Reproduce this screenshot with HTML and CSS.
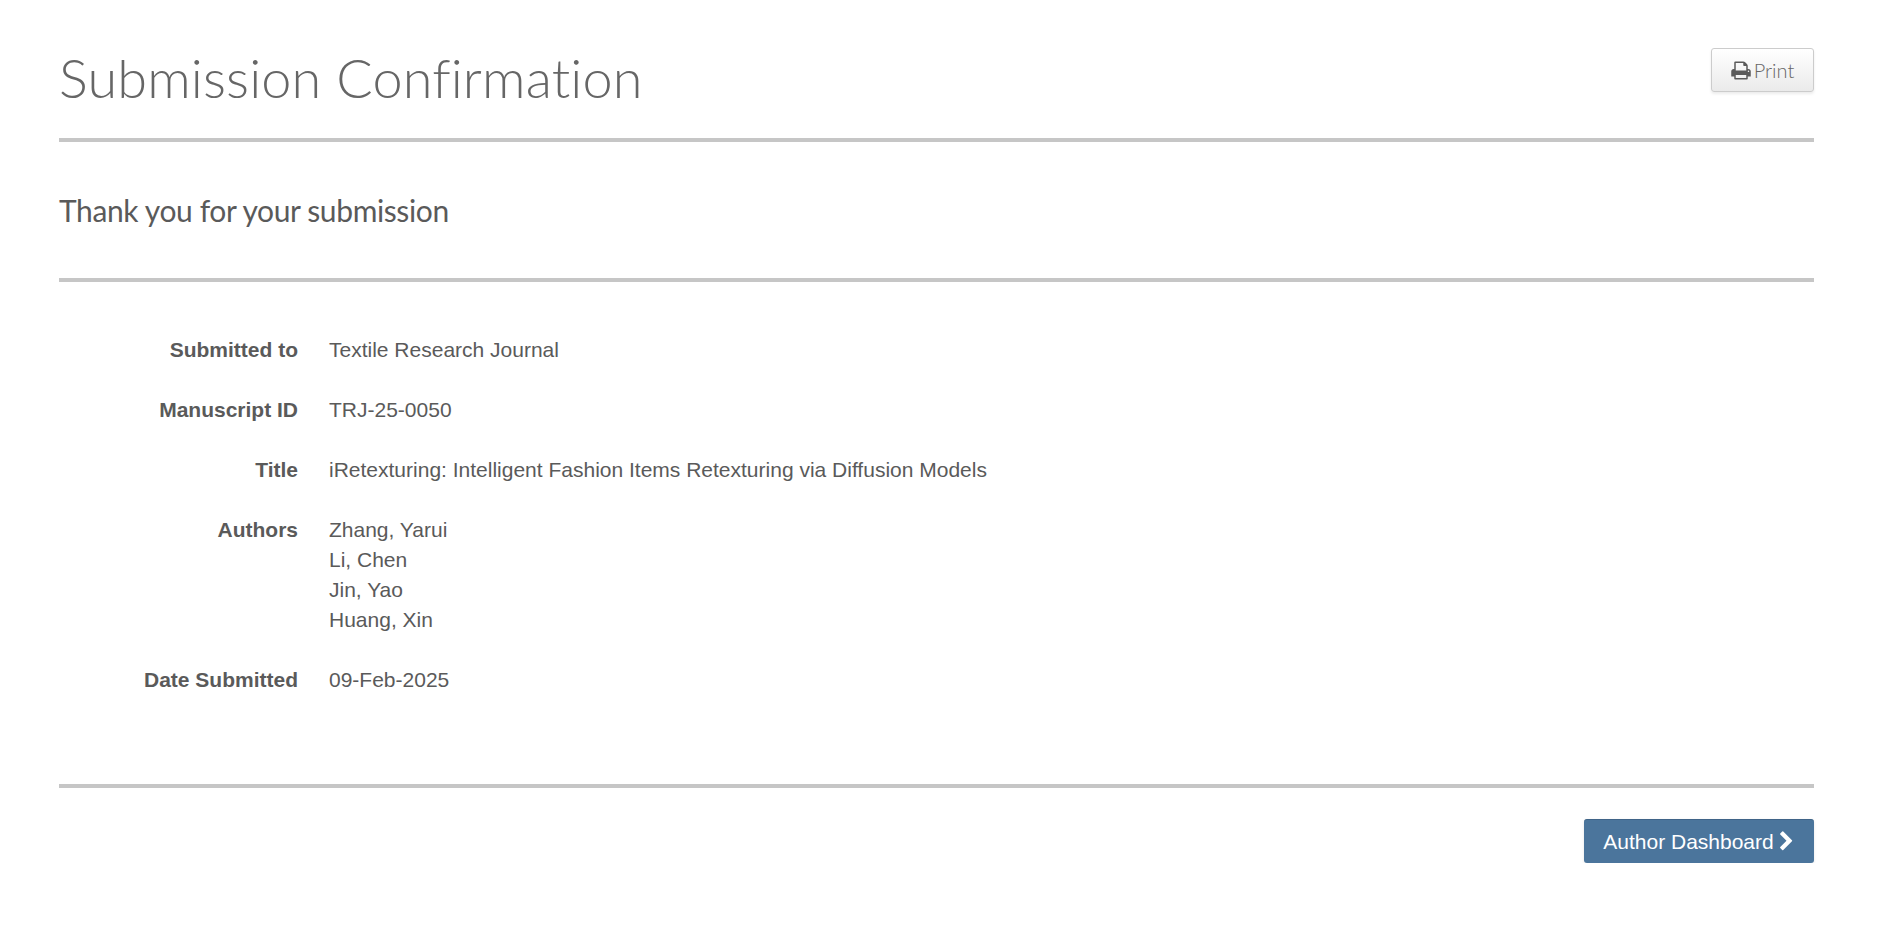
FILE: index.html
```html
<!DOCTYPE html>
<html lang="en">

<head>
    <meta charset="UTF-8">
    <meta name="viewport" content="width=device-width, initial-scale=1.0">
    <title>Submission Confirmation</title>
    <link rel="stylesheet" href="styles.css">
</head>

<body>
    <div class="container">
        <!-- Page header -->
        <div class="page-header">
            <h1>Submission Confirmation</h1>
            <button class="btn-print">
                <svg class="icon-print" viewBox="0 0 1664 1792" aria-hidden="true"><path d="M384 1536h896v-256h-896v256zm0-640h896v-384h-160q-40 0-68-28t-28-68v-160h-640v640zm1152 64q0-26-19-45t-45-19-45 19-19 45 19 45 45 19 45-19 19-45zm128 0v416q0 13-9.5 22.5t-22.5 9.5h-224v160q0 40-28 68t-68 28h-960q-40 0-68-28t-28-68v-160h-224q-13 0-22.5-9.5t-9.5-22.5v-416q0-79 56.5-135.5t135.5-56.5h64v-544q0-40 28-68t68-28h672q40 0 88 20t76 48l152 152q28 28 48 76t20 88v256h64q79 0 135.5 56.5t56.5 135.5z"/></svg>
                Print
            </button>
        </div>

        <div class="thanks">
            <h2>Thank you for your submission</h2>
        </div>

        <!-- Submission details -->
        <dl class="details">
            <div class="detail-row">
                <dt>Submitted to</dt>
                <dd>Textile Research Journal</dd>
            </div>
            <div class="detail-row">
                <dt>Manuscript ID</dt>
                <dd>TRJ-25-0050</dd>
            </div>
            <div class="detail-row">
                <dt>Title</dt>
                <dd>iRetexturing: Intelligent Fashion Items Retexturing via Diffusion Models</dd>
            </div>
            <div class="detail-row">
                <dt>Authors</dt>
                <dd>
                    <div>Zhang, Yarui</div>
                    <div>Li, Chen</div>
                    <div>Jin, Yao</div>
                    <div>Huang, Xin</div>
                </dd>
            </div>
            <div class="detail-row">
                <dt>Date Submitted</dt>
                <dd>09-Feb-2025</dd>
            </div>
        </dl>

        <div class="actions">
            <button class="btn-primary">
                Author Dashboard
                <svg class="icon-chevron" viewBox="0 0 1792 1792" aria-hidden="true"><path d="M1363 877l-742 742q-19 19-45 19t-45-19l-166-166q-19-19-19-45t19-45l531-531-531-531q-19-19-19-45t19-45l166-166q19-19 45-19t45 19l742 742q19 19 19 45t-19 45z"/></svg>
            </button>
        </div>
    </div>
</body>

</html>
```

FILE: styles.css
```css
* {
    margin: 0;
    padding: 0;
    box-sizing: border-box;
}

body {
    font-family: "Liberation Sans", Arial, sans-serif;
    font-size: 21px;
    line-height: 30px;
    color: #5a5a5a;
    background: #ffffff;
}

.container {
    margin: 0 82px 0 59px;
}

.page-header {
    display: flex;
    justify-content: space-between;
    align-items: flex-start;
    height: 142px;
    padding-top: 48px;
    border-bottom: 4px solid #c6c6c6;
}

h1 {
    margin-top: -2px;
    font-family: Lato, sans-serif;
    font-size: 54px;
    font-weight: 300;
    line-height: 64px;
    letter-spacing: 0.15px;
    font-variant-ligatures: none;
    color: #666666;
}

.btn-print {
    display: flex;
    align-items: center;
    justify-content: center;
    gap: 3px;
    width: 103px;
    height: 44px;
    font-family: Lato, sans-serif;
    font-size: 20px;
    font-weight: 300;
    color: #666666;
    background: linear-gradient(#ffffff, #eaeaea);
    border: 1px solid #cccccc;
    border-radius: 3px;
    box-shadow: 0 2px 3px rgba(0, 0, 0, 0.08);
}

.icon-print {
    width: 20px;
    height: 21px;
    fill: #5a5a5a;
}

.thanks {
    height: 140px;
    padding-top: 48px;
    border-bottom: 4px solid #c6c6c6;
}

h2 {
    font-family: Lato, sans-serif;
    font-size: 30px;
    font-weight: 400;
    line-height: 40px;
    letter-spacing: -0.38px;
    color: #5a5a5a;
}

.details {
    height: 506px;
    padding-top: 53px;
    border-bottom: 4px solid #c6c6c6;
}

.detail-row {
    display: flex;
    gap: 31px;
    margin-bottom: 30px;
}

dt {
    width: 239px;
    text-align: right;
    font-weight: bold;
}

.actions {
    display: flex;
    justify-content: flex-end;
    padding-top: 31px;
}

.btn-primary {
    display: flex;
    align-items: center;
    justify-content: center;
    gap: 2px;
    width: 230px;
    height: 44px;
    padding-left: 2px;
    font-family: inherit;
    font-size: 21px;
    color: #ffffff;
    background: #4b759c;
    border: none;
    border-top: 1px solid #3f6488;
    border-radius: 3px;
    box-shadow: 0 1px 3px rgba(0, 0, 0, 0.1);
}

.icon-chevron {
    width: 21px;
    height: 21px;
    fill: #ffffff;
}
```
